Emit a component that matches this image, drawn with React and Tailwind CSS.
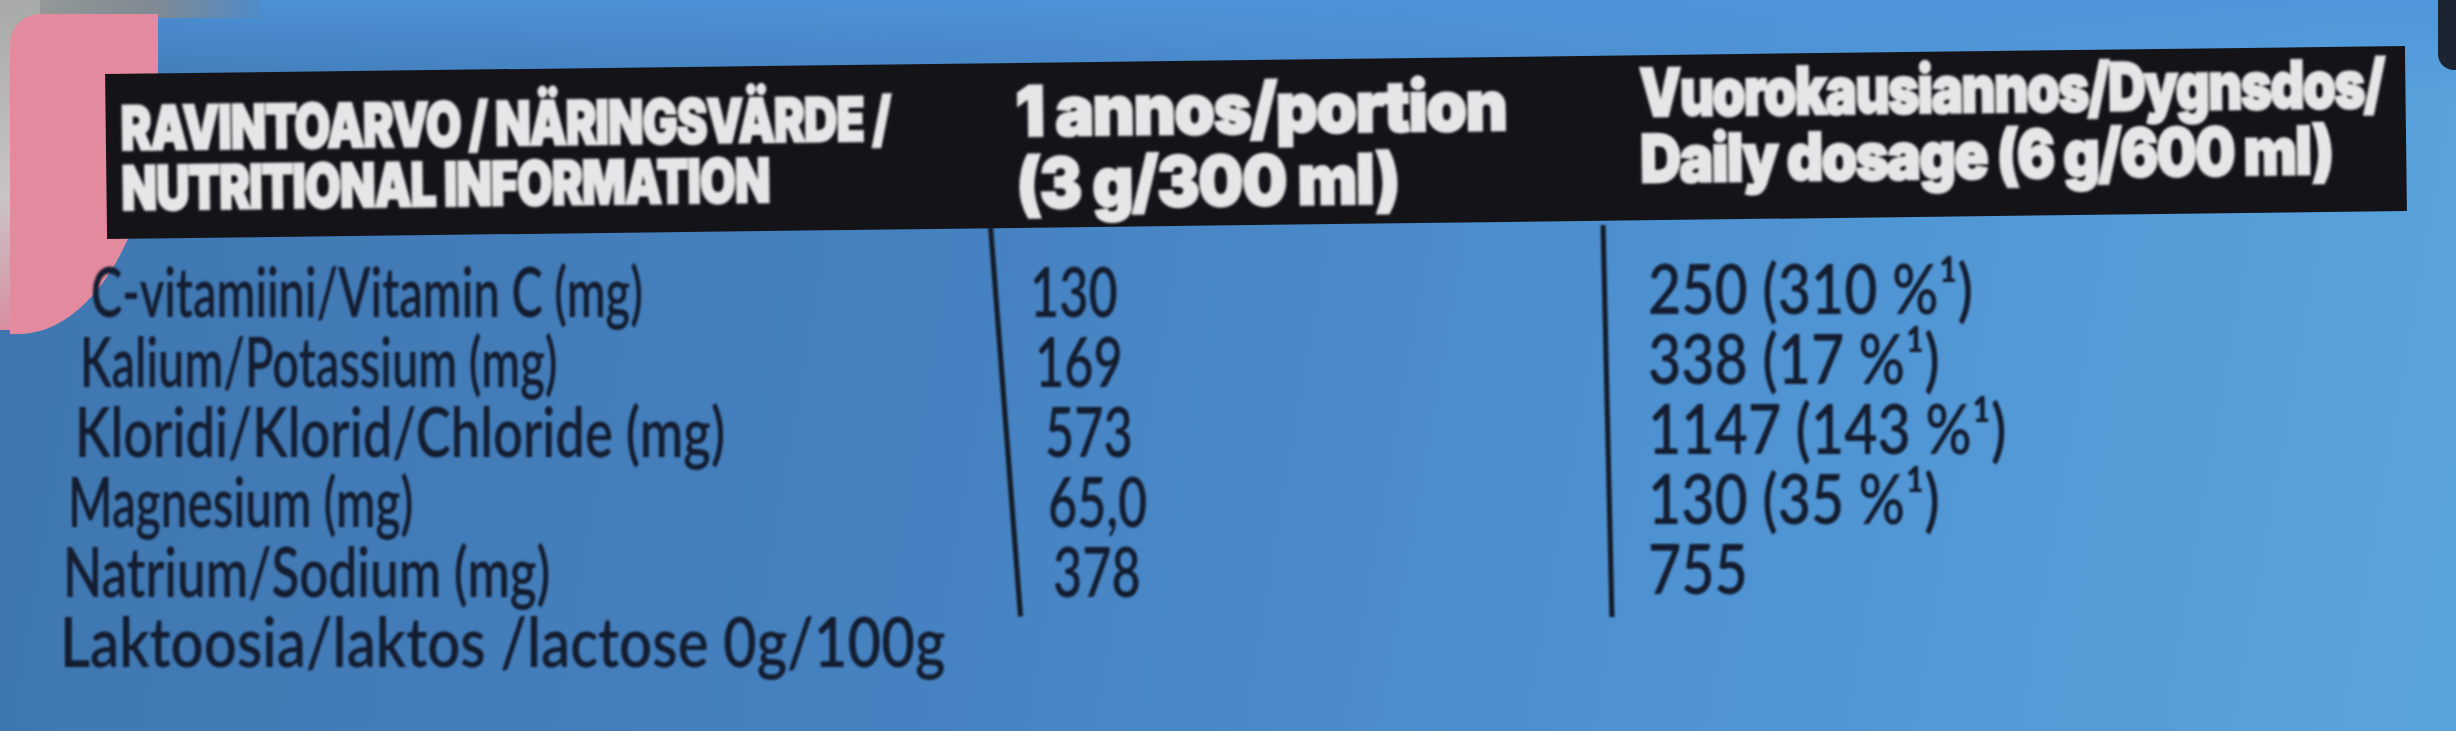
const rows = [
  {
    label: "C-vitamiini/Vitamin C (mg)",
    pad: "pl-[31px]",
    squeeze: "scale-x-[0.67]",
    v1: "130",
    p1: "pl-[22px]",
    v2: "250 (310 %¹)",
  },
  {
    label: "Kalium/Potassium (mg)",
    pad: "pl-[20px]",
    squeeze: "scale-x-[0.67]",
    v1: "169",
    p1: "pl-[27px]",
    v2: "338 (17 %¹)",
  },
  {
    label: "Kloridi/Klorid/Chloride (mg)",
    pad: "pl-[15px]",
    squeeze: "scale-x-[0.75]",
    v1: "573",
    p1: "pl-[37px]",
    v2: "1147 (143 %¹)",
  },
  {
    label: "Magnesium (mg)",
    pad: "pl-[8px]",
    squeeze: "scale-x-[0.68]",
    v1: "65,0",
    p1: "pl-[40px]",
    v2: "130 (35 %¹)",
  },
  {
    label: "Natrium/Sodium (mg)",
    pad: "pl-[3px]",
    squeeze: "scale-x-[0.73]",
    v1: "378",
    p1: "pl-[45px]",
    v2: "755",
  },
];

const App = () => {
  return (
    <div className="relative w-[2456px] h-[731px] overflow-hidden font-['Lato',sans-serif] bg-[linear-gradient(180deg,rgba(78,148,218,0.85)_0%,rgba(78,148,218,0)_14%),linear-gradient(100deg,#3f76af_0%,#4682c1_40%,#4f93d2_70%,#5aa4dc_100%)]">
      {/* photo edges: gray corner, pink wrapper, dark corner */}
      <div className="absolute left-0 top-0 w-[260px] h-[18px] bg-[linear-gradient(90deg,#9a9d99,#7f8993_60%,#4f8bc8)]" />
      <div className="absolute left-0 top-0 w-[40px] h-[330px] bg-[linear-gradient(180deg,#a7aaa6,#c9c4c6_60%,#d98ea0)]" />
      <div className="absolute left-[10px] top-[14px] w-[148px] h-[320px] bg-[#e38a9e] rounded-tl-[30px] rounded-br-[140px_250px]" />
      <div className="absolute right-0 top-0 w-[18px] h-[70px] bg-[#1b2430] rounded-bl-[16px]" />

      <div className="relative">
        {/* header band */}
        <div className="ml-[106px] mt-[60px] w-[2300px] h-[165px] bg-[#141418] rotate-[-0.7deg] flex items-start text-[#e6e6e8] font-['Inter',sans-serif] font-black [-webkit-text-stroke:2.5px_#e6e6e8]">
          <div className="w-[910px] shrink-0 pl-[15px] pt-[24px] blur-[1.3px]">
            <div className="origin-left scale-x-[0.77] whitespace-nowrap text-[60px] leading-[60px] tracking-[-0.02em]">
              <div>RAVINTOARVO / NÄRINGSVÄRDE /</div>
              <div>NUTRITIONAL INFORMATION</div>
            </div>
          </div>
          <div className="w-[624px] shrink-0 pt-[12px] blur-[1.3px] text-[69px] leading-[72px] tracking-[-0.02em] whitespace-nowrap">
            <div className="origin-left scale-x-[0.94]">1 annos/portion</div>
            <div className="origin-left scale-x-[0.92]">(3 g/300 ml)</div>
          </div>
          <div className="flex-1 pt-[4px] blur-[1.3px] text-[66px] leading-[66px] tracking-[-0.03em] whitespace-nowrap">
            <div className="origin-left scale-x-[0.8]">Vuorokausiannos/Dygnsdos/</div>
            <div className="origin-left scale-x-[0.86]">Daily dosage (6 g/600 ml)</div>
          </div>
        </div>

        {/* table body */}
        <div className="flex items-start text-[#141d30] font-semibold text-[70px] leading-[70px] blur-[0.9px]">
          <div className="w-[1003px] shrink-0 pl-[60px] pt-[30px]">
            {rows.map((r) => (
              <div key={r.label} className={`h-[70px] whitespace-nowrap ${r.pad}`}>
                <span className={`inline-block origin-left ${r.squeeze}`}>{r.label}</span>
              </div>
            ))}
            <div className="h-[70px] whitespace-nowrap">
              <span className="inline-block origin-left scale-x-[0.83]">
                Laktoosia/laktos /lactose 0g/100g
              </span>
            </div>
          </div>

          <div className="w-[5px] h-[392px] shrink-0 bg-[#141a26] rotate-[-4.4deg]" />

          <div className="w-[597px] shrink-0 pt-[30px]">
            {rows.map((r) => (
              <div key={r.v1} className={`h-[70px] whitespace-nowrap ${r.p1}`}>
                <span className="inline-block origin-left scale-x-[0.72]">{r.v1}</span>
              </div>
            ))}
          </div>

          <div className="w-[5px] h-[392px] shrink-0 bg-[#141a26] rotate-[-1.3deg]" />

          <div className="pl-[38px] pt-[27px]">
            {rows.map((r) => (
              <div key={r.v2} className="h-[70px] whitespace-nowrap">
                <span className="inline-block origin-left scale-x-[0.82]">{r.v2}</span>
              </div>
            ))}
          </div>
        </div>
      </div>
    </div>
  );
};

export default App;
